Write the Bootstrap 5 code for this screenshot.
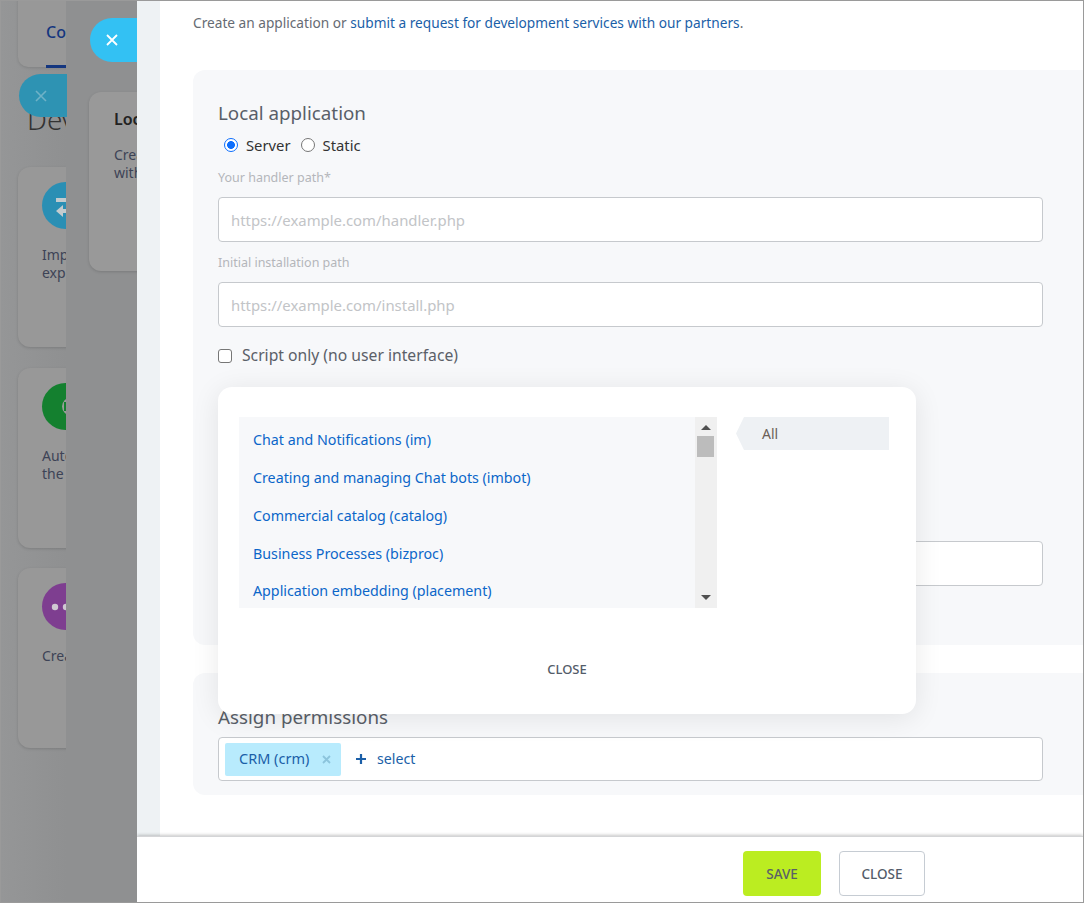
<!DOCTYPE html>
<html lang="en">
<head>
<meta charset="utf-8">
<title>Local application</title>
<link href="https://cdn.jsdelivr.net/npm/bootstrap@5.3.0/dist/css/bootstrap.min.css" rel="stylesheet">
<style>
html,body{margin:0;height:100%;overflow:hidden}
body{font-family:"Noto Sans","Open Sans","Liberation Sans",sans-serif;background:#fff}
.stage{position:relative;width:1084px;height:903px;overflow:hidden;background:#8f9091;border:1px solid #9a9a9a}
/* layer 1: dimmed page */
.layer-page{position:absolute;inset:0 auto 0 0;width:66px;overflow:hidden;background:linear-gradient(90deg,#959697 0,#8f9091 100%)}
.tab-card{position:absolute;left:17px;top:-20px;width:100px;height:86px;background:#989898;border-radius:10px;box-shadow:0 1px 3px rgba(0,0,0,.12)}
.tab-lbl{position:absolute;left:45px;top:21px;font-size:16px;font-weight:500;color:#14367f;white-space:nowrap;line-height:20px}
.tab-line{position:absolute;left:45px;top:64px;width:40px;height:3px;background:#14367f}
.dim-pill{position:absolute;left:18px;top:73px;width:100px;height:43px;border-radius:22px;background:#2e93b3;z-index:2;display:flex;align-items:center;padding-left:15px}
.dev-title{position:absolute;left:26px;top:99px;font-size:28px;font-weight:300;color:#333;white-space:nowrap;line-height:38px}
.app-card{position:absolute;left:17px;width:120px;height:180px;background:#989898;border-radius:12px;box-shadow:0 1px 3px rgba(0,0,0,.15);padding:15px 0 0 24px}
.app-ico{width:47px;height:47px;border-radius:50%;display:flex;align-items:center;justify-content:center;margin-bottom:17px}
.app-ico svg{display:block}
.app-card p{margin:0;font-size:14px;line-height:18px;color:#3d4356;white-space:nowrap}
.ac1{top:166px}.ac2{top:367px}.ac3{top:567px}
.ico-blue{background:#2a8fb4}.ico-green{background:#14802f}.ico-purple{background:#7e3e90}
/* layer 2 */
.wrap-two{position:absolute;inset:0 auto 0 65px;width:71px;overflow:hidden;background:#8f9091}
.bright-pill{position:absolute;left:24px;top:17px;width:100px;height:44px;border-radius:22px;background:#33c1f3;display:flex;align-items:center;padding-left:15px}
.loc-card{position:absolute;left:23px;top:91px;width:120px;height:179px;background:#999;border-radius:12px;box-shadow:0 1px 3px rgba(0,0,0,.15);padding:15px 0 0 25px}
.loc-card h6{font-size:16px;font-weight:600;color:#222;margin:0 0 15px;line-height:24px;white-space:nowrap}
.loc-card p{font-size:14px;line-height:18px;color:#3d4356;margin:0;white-space:nowrap}
/* layer 3 */
.layer-main{position:absolute;left:136px;top:0;right:0;bottom:0;background:#fff;display:flex;flex-direction:column;overflow:hidden}
.main-scroll{flex:1 1 auto;min-height:0;background:#fff;border-left:23px solid #eef2f4;padding:0 0 0 33px;overflow:hidden}
.intro{font-size:13.68px;line-height:20px;color:#666b73;margin:12px 0 37px;white-space:nowrap}
.intro a{color:#1b5fa8;text-decoration:none}
.sect{background:#f7f8fa;border-radius:12px 0 0 12px;padding:0 40px 0 25px}
.sect-a{height:575px;padding-top:30px}
.sect-b{height:122px;margin-top:28px;padding-top:31px}
.sect-title{font-size:18.8px;font-weight:400;color:#595f68;line-height:26px;margin:0}
.radios{display:flex;align-items:center;padding-left:6px;margin-top:9px;height:20px;font-size:14.8px;color:#333}
.radios .form-check-input{width:14px;height:14px;margin:0 8px 0 0;flex:none;border-color:#767676}
.radios .form-check-input:checked{border:1.5px solid #0d6efd;background:radial-gradient(circle,#0d6efd 0 3.6px,#fff 4.2px)}
.radios label{margin-right:10px}
.fld-lbl{font-size:12.5px;line-height:18px;color:#b4b6ba;margin:14px 0 10px;display:block}
.fld-lbl2{margin:12px 0 10px}
.txt-in{display:block;height:45px;width:825px;border:1px solid #c6c9cd;border-radius:4px;padding:0 12px;font-size:14.9px;background:#fff;color:#333}
.txt-in::placeholder{color:#c2c4c7;opacity:1}
.chk-row{display:flex;align-items:center;margin-top:18px;height:22px;font-size:15.7px;color:#5b6068}
.chk-row .form-check-input{width:14px;height:14px;margin:0 10px 0 0;border-color:#767676;border-radius:3px}
.lower-in{margin-top:174px}
.perm-box{display:flex;align-items:center;height:44px;width:825px;background:#fff;border:1px solid #c6c9cd;border-radius:4px;padding:0 6px;margin-top:7px}
.chip{display:flex;align-items:center;height:33px;width:116px;background:#b8ebfd;border-radius:2px;padding-left:14px;font-size:14.5px;color:#1b5fa8}
.chip svg{margin-left:13px}
.sel-btn{display:flex;align-items:center;margin-left:15px;font-size:14.2px;color:#1b5fa8}
.sel-btn svg{margin-right:11px}
.main-foot{flex:none;height:66px;background:#fff;box-shadow:0 -1px 3px rgba(0,0,0,.22);border-top:1px solid #d4d5d7;display:flex;align-items:flex-start;padding:14px 0 0 606px;gap:18px;position:relative}
.btn-save,.btn-shut{height:45px;border-radius:4px;font-size:13.5px;font-weight:500;padding:2px 0 0;display:flex;align-items:center;justify-content:center}
.btn-save{width:78px;background:#bbed21;border:0;color:#5a6068}
.btn-shut{width:86px;background:#fff;border:1px solid #c6ccd3;color:#535c69}
/* popup */
.popup{position:absolute;left:217px;top:386px;width:698px;height:327px;background:#fff;border-radius:14px;box-shadow:0 4px 28px rgba(0,0,0,.09);z-index:5;padding:30px 27px 0 21px}
.pop-body{display:flex;height:191px}
.scope-list{width:478px;flex:none;display:flex;background:#f7f8fa;overflow:hidden}
.scope-items{flex:1;list-style:none;margin:0;padding:0 0 0 14px}
.scope-items li{height:37.8px;display:flex;align-items:center;font-size:14.25px;color:#0b66c9}
.scope-items li:first-child{margin-top:4px}
.fake-bar{width:22px;flex:none;background:#f0f0f0;position:relative}
.sb-thumb{position:absolute;left:2px;top:19px;width:17px;height:21px;background:#bcbcbc}
.tri-up,.tri-dn{position:absolute;left:6px;width:0;height:0;border-left:5px solid transparent;border-right:5px solid transparent}
.tri-up{top:8px;border-bottom:5px solid #505050}
.tri-dn{bottom:8px;border-top:5px solid #505050}
.cat-wrap{margin-left:19px}
.cat-pill{width:153px;height:33px;background:#eef1f4;clip-path:polygon(8px 0,100% 0,100% 100%,8px 100%,0 50%);font-size:14px;color:#6b5f57;display:flex;align-items:center;padding-left:26px}
.pop-close{display:flex;justify-content:center;margin:46px -27px 0 -21px}
.pop-close button{background:none;border:0;padding:0;font-size:13px;font-weight:500;color:#535c69;line-height:30px;height:30px}
</style>
</head>
<body>
<div class="stage">
  <div class="layer-page">
    <div class="tab-card"></div>
    <div class="tab-lbl">Configuration</div>
    <div class="tab-line"></div>
    <div class="dev-title">Developer resources</div>
    <div class="dim-pill"><svg width="14" height="14" viewBox="0 0 14 14"><path d="M2 2l10 10M12 2L2 12" stroke="#6fb2c7" stroke-width="1.6"/></svg></div>
    <div class="app-card ac1">
      <div class="app-ico ico-blue"><svg width="47" height="47" viewBox="0 0 47 47"><path d="M14 16h20v4H14zM14 29l7-6v4h16v4H21v4z" fill="#c3cbce"/></svg></div>
      <p>Import and<br>export data</p>
    </div>
    <div class="app-card ac2">
      <div class="app-ico ico-green"><svg width="47" height="47" viewBox="0 0 47 47"><circle cx="29" cy="23.5" r="9" fill="#9a9d9b"/><rect x="22" y="19" width="8" height="9" fill="#14802f"/></svg></div>
      <p>Automate<br>the work</p>
    </div>
    <div class="app-card ac3">
      <div class="app-ico ico-purple"><svg width="30" height="8" viewBox="0 0 30 8"><circle cx="4" cy="4" r="3.2" fill="#cfc8d2"/><circle cx="15" cy="4" r="3.2" fill="#cfc8d2"/><circle cx="26" cy="4" r="3.2" fill="#cfc8d2"/></svg></div>
      <p>Create other</p>
    </div>
  </div>

  <div class="wrap-two">
    <div class="bright-pill"><svg width="14" height="14" viewBox="0 0 14 14"><path d="M2 2l10 10M12 2L2 12" stroke="#fff" stroke-width="1.8"/></svg></div>
    <div class="loc-card">
      <h6>Local</h6>
      <p>Create an<br>with the</p>
    </div>
  </div>

  <div class="layer-main">
    <div class="main-scroll">
      <p class="intro">Create an application or <a href="#">submit a request for development services with our partners</a>.</p>
      <section class="sect sect-a">
        <h2 class="sect-title">Local application</h2>
        <div class="radios">
          <input class="form-check-input" type="radio" name="kind" id="r1" checked><label for="r1">Server</label>
          <input class="form-check-input" type="radio" name="kind" id="r2"><label for="r2">Static</label>
        </div>
        <label class="fld-lbl">Your handler path*</label>
        <input class="txt-in" type="text" placeholder="https://example.com/handler.php">
        <label class="fld-lbl fld-lbl2">Initial installation path</label>
        <input class="txt-in" type="text" placeholder="https://example.com/install.php">
        <div class="chk-row"><input class="form-check-input" type="checkbox" id="c1"><label for="c1">Script only (no user interface)</label></div>
        <input class="txt-in lower-in" type="text">
      </section>
      <section class="sect sect-b">
        <h2 class="sect-title">Assign permissions</h2>
        <div class="perm-box">
          <span class="chip">CRM (crm)<svg width="9" height="9" viewBox="0 0 9 9"><path d="M1 1l7 7M8 1L1 8" stroke="#8cc4dc" stroke-width="1.8"/></svg></span>
          <span class="sel-btn"><svg width="10" height="10" viewBox="0 0 10 10"><path d="M5 0v10M0 5h10" stroke="#1b5fa8" stroke-width="2.2"/></svg>select</span>
        </div>
      </section>
    </div>
    <div class="main-foot">
      <button class="btn btn-save" type="button">SAVE</button>
      <button class="btn btn-shut" type="button">CLOSE</button>
    </div>
  </div>

  <div class="popup">
    <div class="pop-body">
      <div class="scope-list">
        <ul class="scope-items">
          <li>Chat and Notifications (im)</li>
          <li>Creating and managing Chat bots (imbot)</li>
          <li>Commercial catalog (catalog)</li>
          <li>Business Processes (bizproc)</li>
          <li>Application embedding (placement)</li>
        </ul>
        <div class="fake-bar"><span class="tri-up"></span><span class="sb-thumb"></span><span class="tri-dn"></span></div>
      </div>
      <div class="cat-wrap"><div class="cat-pill">All</div></div>
    </div>
    <div class="pop-close"><button type="button">CLOSE</button></div>
  </div>
</div>
<script src="https://cdn.jsdelivr.net/npm/bootstrap@5.3.0/dist/js/bootstrap.bundle.min.js"></script>
</body>
</html>
